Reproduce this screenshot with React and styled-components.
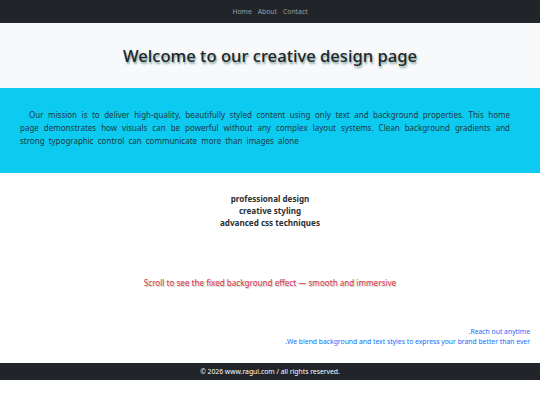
import React from 'react';
import styled, { createGlobalStyle } from 'styled-components';

const GlobalStyle = createGlobalStyle`
  html, body {
    margin: 0;
    padding: 0;
    background: #ffffff;
    font-family: "Noto Sans", "DejaVu Sans", sans-serif;
  }
`;

const Nav = styled.nav`
  height: 23px;
  background-color: #212529;
  display: flex;
  justify-content: center;
  align-items: center;
  gap: 6px;
`;

const NavLink = styled.a`
  color: rgba(255, 255, 255, 0.55);
  font-size: 6.8px;
  text-decoration: none;
`;

const Header = styled.header`
  height: 65px;
  background-color: #f8f9fa;
  display: flex;
  justify-content: center;
  align-items: center;
`;

const Title = styled.h1`
  margin: 0;
  font-size: 16.6px;
  font-weight: 500;
  color: #212529;
  text-shadow: 1px 2px 2px rgba(32, 100, 90, 0.55);
`;

const Mission = styled.section`
  height: 85px;
  box-sizing: border-box;
  background-color: #0dcaf0;
  padding: 20px 30px 0 20px;
`;

const MissionText = styled.p`
  margin: 0;
  font-size: 8px;
  line-height: 13px;
  color: #1d3a44;
  text-align: justify;
  text-indent: 9px;
  word-spacing: 2px;
`;

const Features = styled.ul`
  list-style: none;
  margin: 0;
  padding: 20px 0 0;
  text-align: center;
`;

const Feature = styled.li`
  font-size: 8.1px;
  line-height: 12px;
  font-weight: 700;
  color: #2b2f33;
`;

const ScrollNote = styled.p`
  margin: 48px 0 0;
  text-align: center;
  font-size: 8.1px;
  color: #dc3545;
  text-shadow: 1px 1px 1px rgba(0, 0, 0, 0.25);
`;

const Contact = styled.div`
  margin-top: 39px;
  padding: 0 10px;
  direction: rtl;
  text-align: right;
`;

const ContactLine = styled.p`
  margin: 0;
  font-size: 6.8px;
  line-height: 10px;
  color: #0d6efd;
`;

const Footer = styled.footer`
  margin-top: 16px;
  height: 17px;
  background-color: #212529;
  display: flex;
  justify-content: center;
  align-items: center;
  color: #ffffff;
  font-size: 6.8px;
`;

const features = ['professional design', 'creative styling', 'advanced css techniques'];

export default function App() {
  return (
    <>
      <GlobalStyle />
      <Nav>
        <NavLink href="#">Home</NavLink>
        <NavLink href="#">About</NavLink>
        <NavLink href="#">Contact</NavLink>
      </Nav>
      <Header>
        <Title>Welcome to our creative design page</Title>
      </Header>
      <Mission>
        <MissionText>
          Our mission is to deliver high-quality, beautifully styled content using only text and
          background properties. This home page demonstrates how visuals can be powerful without
          any complex layout systems. Clean background gradients and strong typographic control
          can communicate more than images alone
        </MissionText>
      </Mission>
      <Features>
        {features.map(f => (
          <Feature key={f}>{f}</Feature>
        ))}
      </Features>
      <ScrollNote>Scroll to see the fixed background effect — smooth and immersive</ScrollNote>
      <Contact>
        <ContactLine>Reach out anytime.</ContactLine>
        <ContactLine>We blend background and text styles to express your brand better than ever.</ContactLine>
      </Contact>
      <Footer>© 2026 www.ragul.com / all rights reserved.</Footer>
    </>
  );
}
